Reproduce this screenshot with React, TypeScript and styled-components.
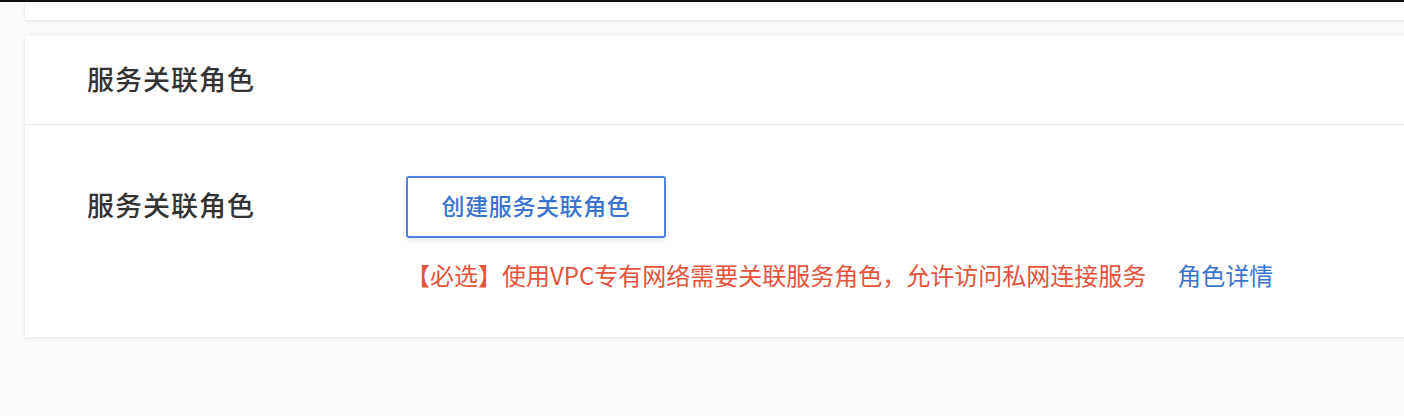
import styled, { createGlobalStyle } from "styled-components";

const GlobalStyle = createGlobalStyle`
  html, body {
    margin: 0;
    padding: 0;
    background: #fafafa;
    overflow: hidden;
  }
  body {
    font-family: "Noto Sans CJK SC", "Noto Sans", sans-serif;
  }
`;

const TopBar = styled.div`
  height: 2px;
  background: #111;
`;

const Page = styled.div`
  display: flex;
  flex-direction: column;
  gap: 16px;
  padding: 0 0 80px 25px;
  margin-right: -30px;
`;

const Card = styled.section<{ $stub?: boolean }>`
  background: #fff;
  box-shadow: 0 1px 4px rgba(0, 0, 0, 0.09);
  ${(p) => (p.$stub ? "height: 18px;" : "")}
`;

const CardHeader = styled.header`
  height: 89px;
  display: flex;
  align-items: center;
  padding: 0 0 3px 62px;
  box-sizing: border-box;
  border-bottom: 1px solid #ececec;
  font-size: 27px;
  font-weight: 500;
  color: #333;
  letter-spacing: 1px;
`;

const CardBody = styled.div`
  padding: 51px 0 47px 62px;
`;

const FormRow = styled.div`
  display: grid;
  grid-template-columns: 319px 1fr;
  align-items: start;
`;

const Label = styled.div`
  height: 62px;
  display: flex;
  align-items: center;
  padding-bottom: 5px;
  box-sizing: border-box;
  font-size: 27px;
  font-weight: 500;
  color: #333;
  letter-spacing: 1px;
`;

const Field = styled.div`
  display: flex;
  flex-direction: column;
  align-items: flex-start;
  gap: 22px;
`;

const OutlineButton = styled.button`
  width: 260px;
  height: 62px;
  padding: 0 0 4px;
  border: 2px solid #4a82da;
  border-radius: 3px;
  background: #fff;
  box-shadow: 0 2px 5px rgba(0, 0, 0, 0.1);
  color: #3a74cf;
  font-family: inherit;
  font-size: 23px;
  font-weight: 500;
  letter-spacing: 0.6px;
  cursor: pointer;
`;

const Hint = styled.p`
  margin: 0;
  display: flex;
  gap: 31px;
  font-size: 24px;
  line-height: 30px;
  color: #e5533a;
`;

const HintLink = styled.a`
  color: #3a74cf;
  text-decoration: none;
  cursor: pointer;
`;

export default function App() {
  return (
    <>
      <GlobalStyle />
      <TopBar />
      <Page>
        <Card $stub />
        <Card>
          <CardHeader>服务关联角色</CardHeader>
          <CardBody>
            <FormRow>
              <Label>服务关联角色</Label>
              <Field>
                <OutlineButton>创建服务关联角色</OutlineButton>
                <Hint>
                  <span>【必选】使用VPC专有网络需要关联服务角色，允许访问私网连接服务</span>
                  <HintLink>角色详情</HintLink>
                </Hint>
              </Field>
            </FormRow>
          </CardBody>
        </Card>
      </Page>
    </>
  );
}
